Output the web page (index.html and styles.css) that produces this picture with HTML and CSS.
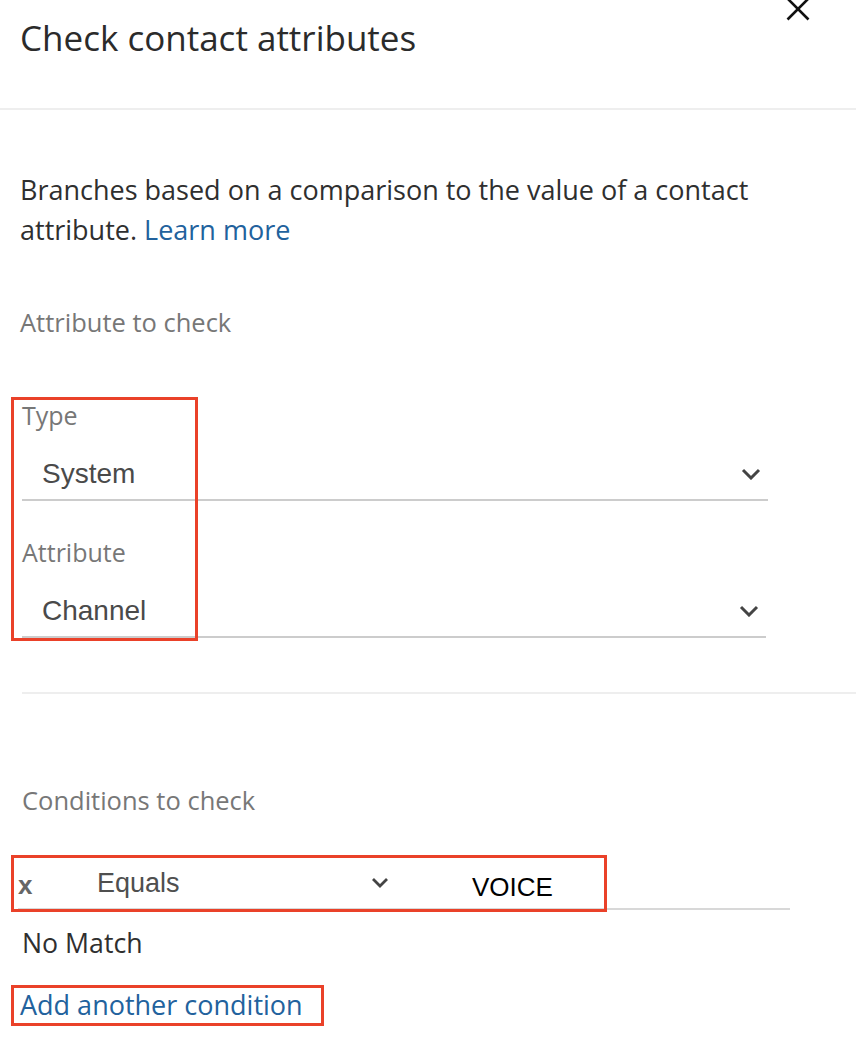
FILE: index.html
```html
<!DOCTYPE html>
<html lang="en">
<head>
<meta charset="utf-8">
<title>Check contact attributes</title>
<link rel="stylesheet" href="styles.css">
</head>
<body>
<div class="panel">
  <header class="header">
    <h1 class="title">Check contact attributes</h1>
    <button class="close" aria-label="Close">
      <svg width="24" height="24" viewBox="0 0 24 24"><path d="M1.5 1.5 L22.5 22.5 M22.5 1.5 L1.5 22.5" stroke="#111" stroke-width="2.6" fill="none"/></svg>
    </button>
  </header>

  <main class="content">
    <p class="intro">Branches based on a comparison to the value of a contact attribute. <a class="link" href="#">Learn more</a></p>

    <h2 class="section-label">Attribute to check</h2>

    <div class="field">
      <div class="field-label">Type</div>
      <div class="select select-type">
        <span class="select-value">System</span>
        <svg class="chev" width="20" height="12" viewBox="0 0 20 12"><path d="M2 2 L10 10 L18 2" stroke="#444" stroke-width="3" fill="none"/></svg>
      </div>
    </div>

    <div class="field field-attr">
      <div class="field-label">Attribute</div>
      <div class="select select-attr">
        <span class="select-value">Channel</span>
        <svg class="chev" width="20" height="12" viewBox="0 0 20 12"><path d="M2 2 L10 10 L18 2" stroke="#444" stroke-width="3" fill="none"/></svg>
      </div>
    </div>
  </main>

  <hr class="divider">

  <section class="content conditions">
    <h2 class="section-label">Conditions to check</h2>
    <div class="cond-row">
      <span class="cond-x">x</span>
      <span class="cond-op">Equals</span>
      <svg class="chev chev-small" width="18" height="11" viewBox="0 0 18 11"><path d="M2 2 L9 9 L16 2" stroke="#444" stroke-width="2.8" fill="none"/></svg>
      <span class="cond-value">VOICE</span>
    </div>
    <div class="no-match">No Match</div>
    <a class="link add-link" href="#">Add another condition</a>
  </section>
</div>

<div class="annot annot-1"></div>
<div class="annot annot-2"></div>
<div class="annot annot-3"></div>
</body>
</html>
```

FILE: styles.css
```css
* { box-sizing: border-box; }

html, body {
  margin: 0;
  padding: 0;
  background: #fff;
}

body {
  position: relative;
  width: 856px;
  height: 1038px;
  overflow: hidden;
  font-family: "Open Sans", "Noto Sans", sans-serif;
  color: #333;
}

.header {
  display: flex;
  justify-content: space-between;
  align-items: flex-start;
  height: 110px;
  padding-left: 20px;
  border-bottom: 2px solid #eeeeee;
}

.title {
  margin: 0;
  padding-top: 14px;
  font-weight: 400;
  font-size: 35px;
  line-height: 48px;
  color: #2b2b2b;
}

.close {
  margin: -3px 46px 0 0;
  padding: 0;
  border: 0;
  background: none;
  width: 24px;
  height: 24px;
}
.close svg { display: block; }

.content {
  padding: 0 20px;
}

.intro {
  margin: 60px 0 0;
  font-size: 27px;
  line-height: 40px;
  color: #2f2f2f;
  max-width: 780px;
}

.link {
  color: #22629d;
  text-decoration: none;
}

.section-label {
  margin: 56px 0 0;
  font-weight: 400;
  font-size: 25.5px;
  line-height: 32px;
  color: #777;
}

.field {
  margin-top: 61px;
  padding-left: 2px;
}

.field-label {
  font-size: 25px;
  line-height: 32px;
  color: #777;
}

.select {
  display: flex;
  align-items: center;
  justify-content: space-between;
  height: 70px;
  padding: 18px 7px 0 20px;
  border-bottom: 2px solid #cccccc;
  font-family: "Liberation Sans", Arial, sans-serif;
  font-size: 28px;
  line-height: 32px;
  color: #4a4a4a;
}
.select-type { width: 746px; }
.select-attr { width: 744px; }

.field-attr { margin-top: 35px; }

.chev { display: block; }

.divider {
  margin: 54px 0 0 22px;
  border: 0;
  border-top: 2px solid #eeeeee;
  height: 0;
}

.conditions .section-label { margin-top: 90px; padding-left: 2px; }

.cond-row {
  display: flex;
  align-items: flex-start;
  width: 772px;
  height: 60px;
  margin: 34px 0 0 -2px;
  border-bottom: 2px solid #d8d8d8;
  font-family: "Liberation Sans", Arial, sans-serif;
  line-height: 32px;
}

.cond-x {
  width: 79px;
  padding-top: 19px;
  font-size: 26px;
  font-weight: 700;
  color: #666;
}

.cond-op {
  width: 274px;
  padding-top: 17px;
  font-size: 27px;
  color: #4f4f4f;
}

.chev-small { margin: 27px 83px 0 0; }

.cond-value {
  padding-top: 21px;
  font-size: 26px;
  color: #000;
}

.no-match {
  margin: 15px 0 0 2px;
  font-size: 26.7px;
  line-height: 36px;
  color: #2f2f2f;
}

.add-link {
  display: block;
  width: fit-content;
  margin-top: 26px;
  font-size: 27px;
  line-height: 36px;
}

.annot {
  position: absolute;
  border: 3.5px solid #ea4129;
  pointer-events: none;
}
.annot-1 { left: 11px; top: 397px; width: 187px; height: 244px; }
.annot-2 { left: 11px; top: 855px; width: 596px; height: 57px; }
.annot-3 { left: 11px; top: 985px; width: 313px; height: 41px; }
```
